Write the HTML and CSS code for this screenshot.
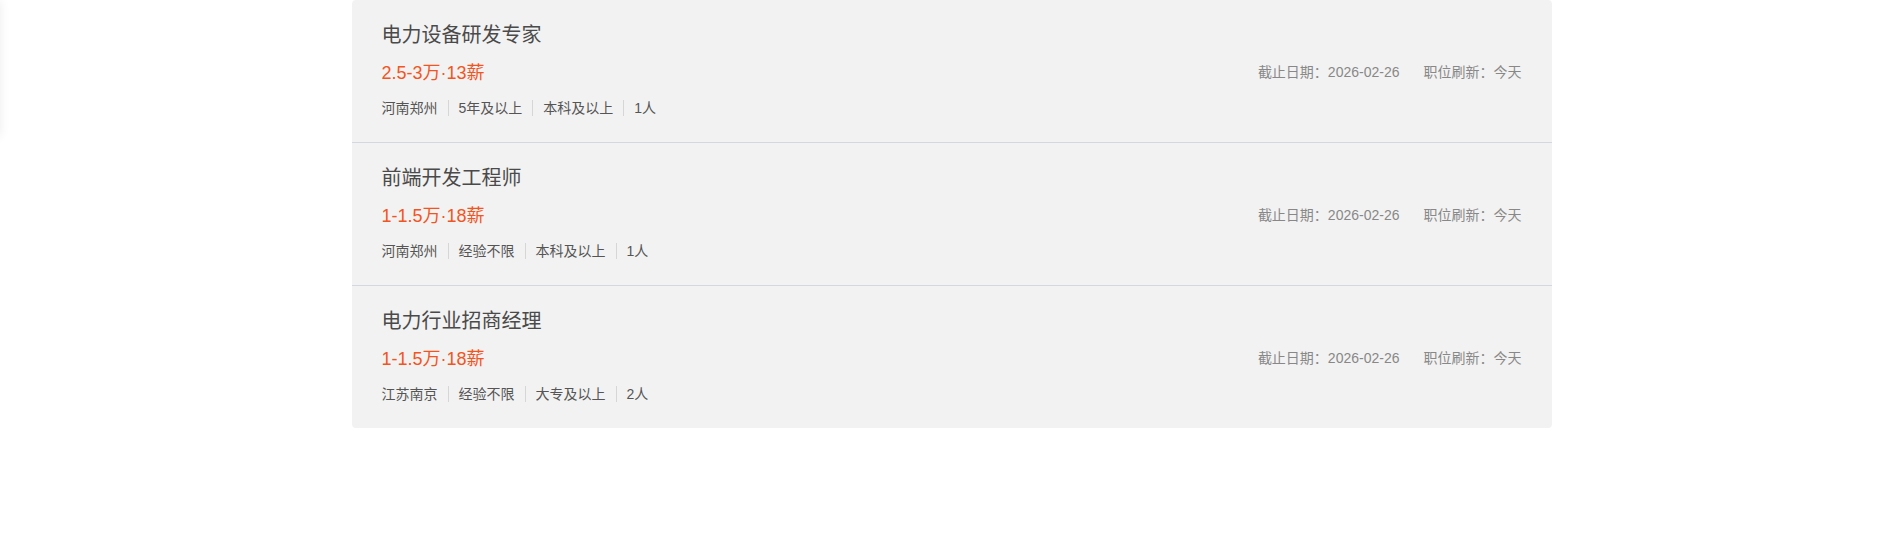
FILE: index.html
```html
<!DOCTYPE html>
<html>
<head>
<title>职位列表</title>
<meta charset="UTF-8">
<meta name="viewport" content="width=device-width, initial-scale=1">
<link rel="stylesheet" href="styles.css">
</head>
<body>

<!-- 左侧浮层（阴影） -->
<div class="side-float"></div>

<!-- 职位列表 -->
<div class="job-list">
    <div class="job-item">
        <h3 class="job-name">电力设备研发专家</h3>
        <div class="job-line">
            <span class="job-salary">2.5-3万·13薪</span>
            <div class="job-meta">
                <span>截止日期：2026-02-26</span>
                <span>职位刷新：今天</span>
            </div>
        </div>
        <ul class="job-tags">
            <li>河南郑州</li>
            <li>5年及以上</li>
            <li>本科及以上</li>
            <li>1人</li>
        </ul>
    </div>
    <div class="job-item">
        <h3 class="job-name">前端开发工程师</h3>
        <div class="job-line">
            <span class="job-salary">1-1.5万·18薪</span>
            <div class="job-meta">
                <span>截止日期：2026-02-26</span>
                <span>职位刷新：今天</span>
            </div>
        </div>
        <ul class="job-tags">
            <li>河南郑州</li>
            <li>经验不限</li>
            <li>本科及以上</li>
            <li>1人</li>
        </ul>
    </div>
    <div class="job-item">
        <h3 class="job-name">电力行业招商经理</h3>
        <div class="job-line">
            <span class="job-salary">1-1.5万·18薪</span>
            <div class="job-meta">
                <span>截止日期：2026-02-26</span>
                <span>职位刷新：今天</span>
            </div>
        </div>
        <ul class="job-tags">
            <li>江苏南京</li>
            <li>经验不限</li>
            <li>大专及以上</li>
            <li>2人</li>
        </ul>
    </div>
</div>

</body>
</html>
```

FILE: styles.css
```css
body {
    margin: 0;
    background: #fff;
    font-family: "Liberation Sans", "Noto Sans CJK SC", sans-serif;
    color: #333;
}

/* 左侧浮层 */
.side-float {
    position: fixed;
    left: -200px;
    top: 0;
    width: 200px;
    height: 136px;
    background: #fff;
    box-shadow: 0 0 10px rgba(0, 0, 0, 0.08);
}

/* 列表容器 */
.job-list {
    width: 1200px;
    margin: 0 auto;
    background-color: #f2f2f2;
    border-radius: 4px;
}

/* 单个职位 */
.job-item {
    height: 143px;
    box-sizing: border-box;
    padding: 20px 30px 0;
    border-bottom: 1px solid #d3d8e0;
}

.job-item:last-child {
    height: 142px;
    border-bottom: none;
}

/* 职位名称 */
.job-name {
    margin: 0;
    font-size: 20px;
    font-weight: normal;
    line-height: 30px;
    color: #4a4a4a;
}

/* 薪资行 */
.job-line {
    display: flex;
    justify-content: space-between;
    align-items: center;
    margin-top: 7px;
    height: 28px;
}

.job-salary {
    font-size: 18px;
    color: #f2551e;
}

.job-meta {
    display: flex;
    gap: 24px;
    font-size: 14px;
    color: #888;
}

/* 标签 */
.job-tags {
    display: flex;
    margin: 15px 0 0;
    padding: 0;
    list-style: none;
    font-size: 14px;
    line-height: 16px;
    color: #555;
}

.job-tags li {
    padding: 0 10px;
    border-left: 1px solid #d6d6d6;
}

.job-tags li:first-child {
    padding-left: 0;
    border-left: none;
}
```
